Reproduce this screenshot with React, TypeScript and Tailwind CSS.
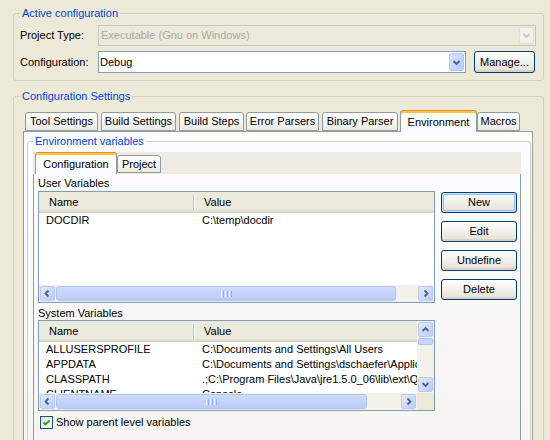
import React from 'react';

type Dir = 'up' | 'down' | 'left' | 'right';

const chevrons: Record<Dir, string> = {
  down: 'M1.5 3 L4.5 6 L7.5 3',
  up: 'M1.5 6 L4.5 3 L7.5 6',
  left: 'M5.5 1.5 L2.5 4.5 L5.5 7.5',
  right: 'M3.5 1.5 L6.5 4.5 L3.5 7.5',
};

function Chevron({ dir, color = '#4D6185' }: { dir: Dir; color?: string }) {
  return (
    <svg width="9" height="9" viewBox="0 0 9 9">
      <path d={chevrons[dir]} fill="none" stroke={color} strokeWidth="1.8" />
    </svg>
  );
}

function ScrollButton({ dir }: { dir: Dir }) {
  return (
    <div className="w-[17px] h-[17px] shrink-0 p-px">
      <div className="h-full rounded-[2px] border border-[#B7CBF6] bg-gradient-to-br from-[#E1EAFE] to-[#BACDF9] flex items-center justify-center">
        <Chevron dir={dir} />
      </div>
    </div>
  );
}

function HThumb({ className }: { className: string }) {
  return (
    <div className={`${className} h-[17px] py-px`}>
      <div className="h-full rounded-[3px] border border-[#AFC3F3] bg-gradient-to-b from-[#CEDBFD] to-[#B9CBF8] flex items-center justify-center gap-px">
        <span className="w-px h-[6px] bg-[#EEF4FE]" />
        <span className="w-px h-[6px] bg-[#8CB0F8]" />
        <span className="w-px h-[6px] bg-[#EEF4FE]" />
        <span className="w-px h-[6px] bg-[#8CB0F8]" />
        <span className="w-px h-[6px] bg-[#EEF4FE]" />
        <span className="w-px h-[6px] bg-[#8CB0F8]" />
      </div>
    </div>
  );
}

function TableHeader() {
  return (
    <div className="h-[21px] shrink-0 flex bg-[#EBEADB] border-b border-[#D6D2C2] shadow-[inset_0_-2px_0_#E2DECD]">
      <div className="w-[154px] pl-[10px] flex items-center">Name</div>
      <div className="w-[2px] h-[15px] self-center border-l border-[#C7C5B2] border-r border-r-white" />
      <div className="pl-[9px] flex items-center">Value</div>
    </div>
  );
}

function Row({ name, value }: { name: string; value: string }) {
  return (
    <div className="h-[15px] flex items-center whitespace-nowrap">
      <div className="w-[156px] pl-[7px] shrink-0">{name}</div>
      <div className="pl-[7px]">{value}</div>
    </div>
  );
}

function XpButton({ label, primary }: { label: string; primary?: boolean }) {
  return (
    <button
      className={`w-[76px] h-[21px] rounded-[3px] border border-[#003C74] bg-gradient-to-b from-white to-[#E3E1D6] flex items-center justify-center ${
        primary
          ? 'shadow-[inset_0_0_0_1px_#CEE7FF,inset_0_0_0_2px_#98B8EA]'
          : 'shadow-[inset_0_-2px_0_#D8D2C6]'
      }`}
    >
      {label}
    </button>
  );
}

function Tab({ label, className, selected }: { label: string; className: string; selected?: boolean }) {
  return (
    <div
      className={`${className} shrink-0 flex items-center justify-center rounded-t-[3px] border border-[#919B9C] whitespace-nowrap ${
        selected
          ? 'border-b-0 border-t-[#E68B2C] shadow-[inset_0_2px_0_#FFC83C] bg-[#FCFCFE] pt-[1px]'
          : 'bg-gradient-to-b from-white to-[#ECEBE6] mb-px'
      }`}
    >
      {label}
    </div>
  );
}

export default function App() {
  return (
    <div className="w-[550px] h-[440px] overflow-hidden bg-[#ECE9D8] text-[11px] leading-[13px] text-black font-['Liberation_Sans','DejaVu_Sans',sans-serif] pt-[6px]">
      {/* Active configuration */}
      <fieldset className="ml-[13px] w-[531px] border border-[#D0D0BF] rounded-[3px] pl-[6px] pr-[7px] pb-[7px]">
        <legend className="px-[2px] leading-[14px] text-[#0046D5]">Active configuration</legend>
        <div className="pt-[5px] flex flex-col gap-[5px]">
          <div className="h-[21px] flex items-center">
            <span className="w-[78px] shrink-0">Project Type:</span>
            <div className="w-[438px] h-[21px] border border-[#C9C7BA] bg-[#EBE9DC] flex items-center">
              <span className="flex-1 pl-[2px] text-[#ACA899]">Executable (Gnu on Windows)</span>
              <div className="w-[17px] h-full p-px">
                <div className="h-full rounded-[2px] border border-[#E2E0D6] bg-[#F3F2EC] flex items-center justify-center">
                  <Chevron dir="down" color="#C9C7BA" />
                </div>
              </div>
            </div>
          </div>
          <div className="h-[22px] flex items-center">
            <span className="w-[78px] shrink-0">Configuration:</span>
            <div className="w-[368px] h-[22px] border border-[#7F9DB9] bg-white flex items-center">
              <span className="flex-1 pl-[1px]">Debug</span>
              <div className="w-[17px] h-full p-px">
                <div className="h-full rounded-[2px] border border-[#B5C8F4] bg-gradient-to-br from-[#D9E4FE] to-[#B6C9F7] flex items-center justify-center">
                  <Chevron dir="down" />
                </div>
              </div>
            </div>
            <button className="ml-[8px] w-[61px] h-[22px] rounded-[3px] border border-[#003C74] bg-gradient-to-b from-white to-[#E3E1D6] shadow-[inset_0_-2px_0_#D8D2C6] flex items-center justify-center">
              Manage...
            </button>
          </div>
        </div>
      </fieldset>

      {/* Configuration Settings */}
      <fieldset className="mt-[8px] ml-[13px] w-[531px] border border-[#D0D0BF] rounded-[3px] pl-[6px] pb-[40px]">
        <legend className="px-[2px] leading-[14px] text-[#0046D5]">Configuration Settings</legend>
        <div className="pt-[7px]">
          <div className="ml-[5px] h-[22px] -mb-px relative z-10 flex items-end">
            <Tab label="Tool Settings" className="w-[73px] h-[19px]" />
            <Tab label="Build Settings" className="ml-[3px] w-[75px] h-[19px]" />
            <Tab label="Build Steps" className="ml-[3px] w-[65px] h-[19px]" />
            <Tab label="Error Parsers" className="ml-[2px] w-[73px] h-[19px]" />
            <Tab label="Binary Parser" className="ml-[3px] w-[76px] h-[19px]" />
            <Tab label="Environment" className="ml-[2px] w-[77px] h-[22px]" selected />
            <Tab label="Macros" className="w-[43px] h-[19px]" />
          </div>
          <div className="ml-[3px] w-[510px] border border-[#919B9C] bg-gradient-to-b from-[#FCFCFE] to-[#F4F3EE] pt-[2px] pl-[3px] pb-[40px]">
            {/* Environment variables */}
            <fieldset className="w-[504px] border border-[#D0D0BF] rounded-[3px] pl-[5px] pb-[40px]">
              <legend className="px-[2px] leading-[14px] text-[#0046D5]">Environment variables</legend>
              <div className="pt-[4px] w-[488px]">
                <div className="h-[22px] -mb-px relative z-10 flex items-end bg-[#EEECE2]">
                  <Tab label="Configuration" className="ml-[2px] w-[82px] h-[22px]" selected />
                  <Tab label="Project" className="w-[44px] h-[18px]" />
                </div>
                <div className="border border-[#919B9C] bg-gradient-to-b from-[#FCFCFE] to-[#F4F3EE] pl-[4px] pt-[2px] pb-[60px]">
                  <div className="h-[14px] leading-[14px]">User Variables</div>
                  <div className="mt-px flex items-start">
                    {/* User variables table */}
                    <div className="w-[397px] h-[112px] border border-[#7F9DB9] bg-white flex flex-col">
                      <TableHeader />
                      <div className="h-[72px] overflow-hidden">
                        <Row name="DOCDIR" value="C:\temp\docdir" />
                      </div>
                      <div className="h-[17px] flex bg-[#F3F1EA]">
                        <ScrollButton dir="left" />
                        <HThumb className="flex-1" />
                        <div className="w-[21px]" />
                        <ScrollButton dir="right" />
                      </div>
                    </div>
                    <div className="ml-[6px] mt-px flex flex-col gap-[8px]">
                      <XpButton label="New" primary />
                      <XpButton label="Edit" />
                      <XpButton label="Undefine" />
                      <XpButton label="Delete" />
                    </div>
                  </div>

                  <div className="mt-[3px] h-[14px] leading-[14px]">System Variables</div>
                  {/* System variables table */}
                  <div className="w-[397px] h-[91px] border border-[#7F9DB9] bg-white flex flex-col">
                    <div className="h-[72px] flex">
                      <div className="w-[378px] flex flex-col">
                        <TableHeader />
                        <div className="h-[51px] overflow-hidden">
                          <Row name="ALLUSERSPROFILE" value="C:\Documents and Settings\All Users" />
                          <Row name="APPDATA" value="C:\Documents and Settings\dschaefer\Application Data" />
                          <Row name="CLASSPATH" value=".;C:\Program Files\Java\jre1.5.0_06\lib\ext\QTJava.zip" />
                          <Row name="CLIENTNAME" value="Console" />
                        </div>
                      </div>
                      <div className="w-[17px] flex flex-col bg-[#F3F1EA]">
                        <ScrollButton dir="up" />
                        <div className="h-[7px] px-px">
                          <div className="h-full rounded-[2px] border border-[#AFC3F3] bg-[#C6D6FC]" />
                        </div>
                        <div className="flex-1" />
                        <ScrollButton dir="down" />
                      </div>
                    </div>
                    <div className="h-[17px] flex">
                      <div className="w-[378px] flex bg-[#F3F1EA]">
                        <ScrollButton dir="left" />
                        <HThumb className="flex-1" />
                        <div className="w-[33px]" />
                        <ScrollButton dir="right" />
                      </div>
                      <div className="w-[17px] bg-[#ECE9D8]" />
                    </div>
                  </div>

                  <label className="mt-[5px] ml-[2px] flex items-center">
                    <span className="w-[13px] h-[13px] border border-[#1C5180] bg-gradient-to-br from-[#DCDCD7] to-white flex items-center justify-center">
                      <svg width="9" height="9" viewBox="0 0 9 9">
                        <path d="M1.5 4.5 L3.5 6.5 L7.5 2.5" fill="none" stroke="#21A121" strokeWidth="1.8" />
                      </svg>
                    </span>
                    <span className="ml-[3px]">Show parent level variables</span>
                  </label>
                </div>
              </div>
            </fieldset>
          </div>
        </div>
      </fieldset>
    </div>
  );
}
